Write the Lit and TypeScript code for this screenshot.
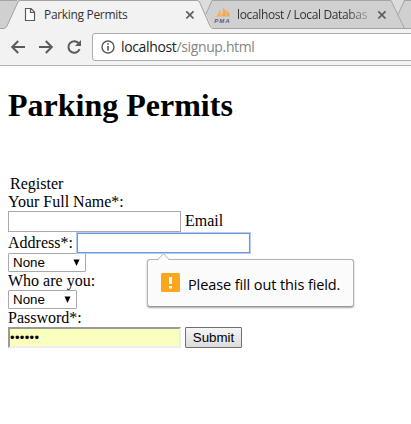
import { LitElement, html, css } from "lit";
import { customElement } from "lit/decorators.js";

@customElement("browser-tabs")
class BrowserTabs extends LitElement {
  static styles = css`
    :host { display: block; position: relative; height: 29px; background: #dcdcdc;
      font: 12px/28px "Open Sans", "Noto Sans", sans-serif; color: #333; overflow: hidden; }
    .shape { position: absolute; left: 0; top: 0; display: block; }
    .row { position: relative; display: flex; height: 29px; }
    .tab { display: flex; align-items: center; box-sizing: border-box; height: 29px; white-space: nowrap; flex: none; }
    .first { width: 206px; padding-left: 24px; }
    .second { width: 192px; padding-left: 8px; }
    .label { flex: none; padding-top: 1px; }
    .first .label { width: 134px; margin-left: 8px; letter-spacing: -0.32px; }
    .second .label { width: 132px; margin-left: 6px; letter-spacing: -0.36px;
      -webkit-mask-image: linear-gradient(90deg, #000 108px, rgba(0,0,0,.25) 132px); }
    .first .close { margin-left: 7px; }
    .second .close { margin-left: 8px; }
    svg { display: block; flex: none; }
  `;
  close() {
    return html`<svg class="close" width="10" height="10" viewBox="0 0 10 10">
      <path d="M1.3 1.3 8.5 8.5M8.500 1.300 1.300 8.500" stroke="#5c5c5c" stroke-width="1.7" /></svg>`;
  }
  render() {
    return html`
      <svg class="shape" width="411" height="29" viewBox="0 0 411 29">
        <path d="M0 0H19L6 28.5H0ZM206 14 212 .5H391L404 28.5H213ZM398 14 404 .5H411V28.5H404Z" fill="#d0d0d0" />
        <path d="M0 .5H17M212 .5H391M404 .5H411M206 14 212 .5M391 .5 404.5 28.5M398 14.5 404.5 .5" stroke="#a5a5a5" fill="none" />
        <path d="M0 29V28.5H4Q6 28 7 26L18 2Q18.500.5 20 .5H197Q198.500.5 199.500 2L210 26Q211.500 28.500 213 28.500H411V29Z" fill="#f2f2f2" />
        <path d="M0 28.500H4Q6 28 7 26L18 2Q18.500.5 20 .5H197Q198.500.5 199.500 2L210 26Q211.500 28.500 213 28.500H411" stroke="#a2a2a2" fill="none" />
      </svg>
      <div class="row">
        <div class="tab first">
          <svg width="12" height="15" viewBox="0 0 12 15">
            <path d="M1.500 1.500H7L10.500 5V13.500H1.500ZM6.500 1.500V5.500H10.500" fill="#fff" stroke="#5a5a5a" stroke-width="1.2" />
          </svg>
          <span class="label">Parking Permits</span>${this.close()}
        </div>
        <div class="tab second">
          <svg width="17" height="16" viewBox="0 0 17 16">
            <path d="M1 10Q5 7 5.500 2Q8 6 6.500 9.500Z" fill="#f5b065" />
            <path d="M7 9.500Q10 5 9 0Q13 5 12 9.500ZM12.500 9.500Q13.500 6 12 2.500Q15.500 5 16 9.500Z" fill="#f9a74a" />
            <text x="0.200" y="15.500" font-family="Liberation Sans" font-size="6" font-weight="bold" font-style="italic" textLength="15.500" fill="#5b5d8a">PMA</text>
          </svg>
          <span class="label">localhost / Local Databas</span>${this.close()}
        </div>
      </div>`;
  }
}

@customElement("browser-toolbar")
class BrowserToolbar extends LitElement {
  static styles = css`
    :host { display: flex; box-sizing: border-box; height: 37px; background: #f2f2f2; border-bottom: 1px solid #b4b4b4;
      padding: 4px 0 4px 10px; align-items: center; overflow: hidden; }
    svg { display: block; flex: none; }
    .fwd { margin-left: 12px; }
    .reload { margin-left: 13px; }
    .box { flex: none; display: flex; align-items: center; box-sizing: border-box; width: 330px; height: 28px; margin-left: 10px;
      border: 1px solid #adadad; border-radius: 3px; background: #fff; padding-left: 8px;
      font: 14px/26px "Open Sans", "Noto Sans", sans-serif; color: #222; }
    .url { margin-left: 6px; white-space: nowrap; letter-spacing: -0.36px; }
    .path { color: #858585; }
  `;
  render() {
    return html`
      <svg width="16" height="16" viewBox="0 0 16 16"><path d="M15 8H2.500M8.200 2 2.200 8l6 6" fill="none" stroke="#5a5a5a" stroke-width="2" /></svg>
      <svg class="fwd" width="16" height="16" viewBox="0 0 16 16"><path d="M1 8H13.500M7.800 2l6 6-6 6" fill="none" stroke="#5a5a5a" stroke-width="2" /></svg>
      <svg class="reload" width="15" height="16" viewBox="0 0 15 16">
        <path d="M12.600 10.200A5.800 5.800 0 1 1 11.500 4" fill="none" stroke="#5a5a5a" stroke-width="2" />
        <path d="M14 1V7H8Z" fill="#5a5a5a" /></svg>
      <div class="box">
        <svg width="14" height="14" viewBox="0 0 14 14"><circle cx="7" cy="7" r="6" fill="none" stroke="#5a5a5a" stroke-width="1.400" />
          <path d="M6.200 6h1.700v4.500H6.200ZM6.200 3.200h1.700v1.600H6.200Z" fill="#5a5a5a" /></svg>
        <span class="url">localhost<span class="path">/signup.html</span></span>
      </div>`;
  }
}

@customElement("app-root")
class AppRoot extends LitElement {
  static styles = css`
    :host { display: block; position: relative; width: 411px; height: 424px; background: #fff; overflow: hidden;
      font: 16px/18px "Liberation Serif", serif; color: #000; }
    main { padding: 21px 8px 0; }
    h1 { margin: 0; font-size: 32px; line-height: 37px; font-weight: bold; white-space: nowrap; }
    form { margin-top: 51px; }
    .legend { height: 18px; padding-left: 2px; }
    .line { height: 18px; }
    .row { display: flex; height: 21px; align-items: center; gap: 4px; white-space: nowrap; }
    .email { margin-top: -2px; }
    input { appearance: none; box-sizing: border-box; width: 173px; height: 21px; margin: 0; padding: 2px; outline: 0;
      border: 1px solid #a9a9a9; border-radius: 0; background: #fff; font: 13px "Liberation Sans", sans-serif; }
    .address { gap: 3px; }
    .focus { border: 1px solid #6f97d6; box-shadow: 0 0 0 1px #b4cdf6; height: 20px; margin-left: 1px; }
    .select { display: flex; align-items: center; justify-content: space-between; box-sizing: border-box; height: 19px;
      border: 1px solid #a9a9a9; border-radius: 1px; padding: 0 5px 0 4px; font: 13.333px/17px "Liberation Sans", sans-serif; }
    .wide { width: 78px; }
    .narrow { width: 69px; }
    .select svg { display: block; margin-top: -1px; }
    .password { display: flex; align-items: center; box-sizing: border-box; width: 173px; height: 21px; padding-left: 0;
      border: 2px solid; border-color: #9a9a9a #eee #eee #9a9a9a; background: #faffbd; font: 13px/17px "Liberation Sans", sans-serif;
      letter-spacing: 0.350px; }
    button { appearance: none; box-sizing: border-box; width: 57px; height: 21px; margin: 0; padding: 0; border: 1px solid #707070;
      border-radius: 1px; background: linear-gradient(#f5f5f5, #dcdcdc); font: 13.333px/17px "Liberation Sans", sans-serif; color: #000; }
    .bubble { position: absolute; left: 147px; top: 259px; box-sizing: border-box; width: 207px; height: 48px; display: flex;
      align-items: center; padding-left: 13px; border: 1px solid #b3b3b3; border-bottom-color: #999; border-radius: 3px; background: #fbfbfb;
      box-shadow: 0 1px 2px rgba(0,0,0,.35); font: 14.5px/20px "Open Sans", "Noto Sans", sans-serif; white-space: nowrap; }
    .tip { position: absolute; left: 9px; top: -7px; display: block; }
    .mark { display: block; margin-top: -1px; }
    .msg { margin: 3px 0 0 8px; letter-spacing: -0.1px; }
  `;
  select(size: string) {
    return html`<div class="select ${size}"><span>None</span>
      <svg width="7" height="7" viewBox="0 0 7 7"><path d="M.5 .5H6.500L3.500 7Z" /></svg></div>`;
  }
  render() {
    return html`
      <browser-tabs></browser-tabs>
      <browser-toolbar></browser-toolbar>
      <main>
        <h1>Parking Permits</h1>
        <form>
          <div class="legend">Register</div>
          <div class="line">Your Full Name*:</div>
          <div class="row"><input type="text" /><span class="email">Email</span></div>
          <div class="row address"><span>Address*:</span><input class="focus" type="text" /></div>
          ${this.select("wide")}
          <div class="line">Who are you:</div>
          ${this.select("narrow")}
          <div class="line">Password*:</div>
          <div class="row"><div class="password">••••••</div><button type="button">Submit</button></div>
        </form>
      </main>
      <div class="bubble">
        <svg class="tip" width="14" height="8" viewBox="0 0 14 8">
          <path d="M.5 7.500 6.500.8l6 6.700V8H.5Z" fill="#fbfbfb" /><path d="M.5 6.800 6.500.8l6 6" fill="none" stroke="#b3b3b3" /></svg>
        <svg class="mark" width="19" height="19" viewBox="0 0 19 19"><rect width="19" height="19" rx="1.500" fill="#faa71e" />
          <path d="M8 4h3v7H8ZM8 13h3v2.500H8Z" fill="#fff" /></svg>
        <span class="msg">Please fill out this field.</span>
      </div>`;
  }
}
